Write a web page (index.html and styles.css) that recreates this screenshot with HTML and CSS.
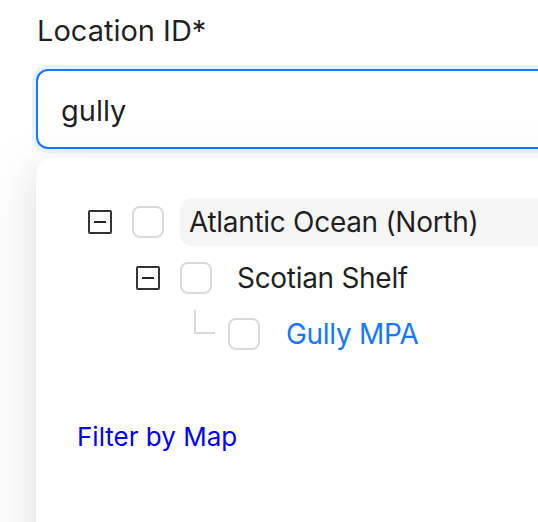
FILE: index.html
```html
<!DOCTYPE html>
<html>
<head>
<meta charset="utf-8">
<link rel="stylesheet" href="styles.css">
</head>
<body>
<div class="page">
  <div class="label">Location ID*</div>
  <div class="input"><span class="value">gully</span></div>
  <div class="dropdown">
    <div class="tree">
      <div class="row lvl0">
        <span class="switcher"><span class="sq"><span class="minus"></span></span></span>
        <span class="check"></span>
        <span class="title active">Atlantic Ocean (North)</span>
      </div>
      <div class="row lvl1">
        <span class="switcher"><span class="sq"><span class="minus"></span></span></span>
        <span class="check"></span>
        <span class="title">Scotian Shelf</span>
      </div>
      <div class="row lvl2">
        <span class="switcher leaf"><span class="leafline"></span></span>
        <span class="check"></span>
        <span class="title match">Gully MPA</span>
      </div>
    </div>
    <a class="filter" href="#">Filter by Map</a>
  </div>
</div>
</body>
</html>
```
FILE: styles.css
```css
html, body {
  margin: 0;
  padding: 0;
  background: #ffffff;
  overflow: hidden;
}
body {
  width: 538px;
  height: 522px;
  font-family: Inter, "Noto Sans", "Liberation Sans", sans-serif;
  font-size: 28px;
  color: rgba(0, 0, 0, 0.88);
}
.page {
  padding: 9px 0 0 36px;
  width: 700px;
}
.label {
  font-size: 29px;
  line-height: 44px;
  height: 44px;
  margin-bottom: 16px;
  padding-left: 1px;
}
.input {
  box-sizing: border-box;
  height: 80px;
  border: 2px solid #1677ff;
  border-radius: 12px;
  box-shadow: 0 0 0 4px rgba(5, 145, 255, 0.1);
  background: #fff;
  display: flex;
  align-items: center;
  padding: 4px 22px 0 23px;
}
.value {
  line-height: 44px;
  font-size: 29px;
}
.dropdown {
  margin-top: 9px;
  background: #fff;
  border-radius: 16px;
  height: 400px;
  padding: 40px 0 0 0;
  box-sizing: border-box;
  box-shadow: 0 12px 32px 0 rgba(0, 0, 0, 0.08),
              0 6px 12px -8px rgba(0, 0, 0, 0.12),
              0 18px 56px 16px rgba(0, 0, 0, 0.05);
}
.tree {
  display: flex;
  flex-direction: column;
  letter-spacing: -0.3px;
}
.row {
  display: flex;
  align-items: center;
  height: 48px;
  margin-bottom: 8px;
}
.lvl0 { padding-left: 40px; }
.lvl1 { padding-left: 88px; }
.lvl2 { padding-left: 136px; }
.switcher {
  width: 48px;
  height: 48px;
  flex: none;
  display: flex;
  align-items: center;
  justify-content: center;
}
.switcher.leaf {
  align-items: flex-start;
  justify-content: flex-start;
}
.sq {
  box-sizing: border-box;
  width: 24px;
  height: 24px;
  border: 2px solid #333333;
  border-radius: 2px;
  display: flex;
  align-items: center;
  justify-content: center;
}
.minus {
  width: 12px;
  height: 2px;
  background: #222;
}
.leafline {
  box-sizing: border-box;
  margin-left: 22px;
  width: 21px;
  height: 24px;
  border-left: 2px solid #d9d9d9;
  border-bottom: 2px solid #d9d9d9;
}
.check {
  box-sizing: border-box;
  flex: none;
  width: 32px;
  height: 32px;
  margin: 0 16px 0 8px;
  border: 2px solid #d9d9d9;
  border-radius: 8px;
  background: #fff;
}
.title {
  height: 48px;
  line-height: 48px;
  padding: 0 9px;
  border-radius: 12px;
  white-space: nowrap;
}
.title.active {
  flex: 1;
  background: #f5f5f5;
}
.title.match {
  color: #1677ff;
  padding-left: 10px;
}
.filter {
  display: inline-block;
  margin: 49px 0 0 41px;
  font-size: 26px;
  line-height: 44px;
  color: #0000ee;
  text-decoration: none;
}
```
